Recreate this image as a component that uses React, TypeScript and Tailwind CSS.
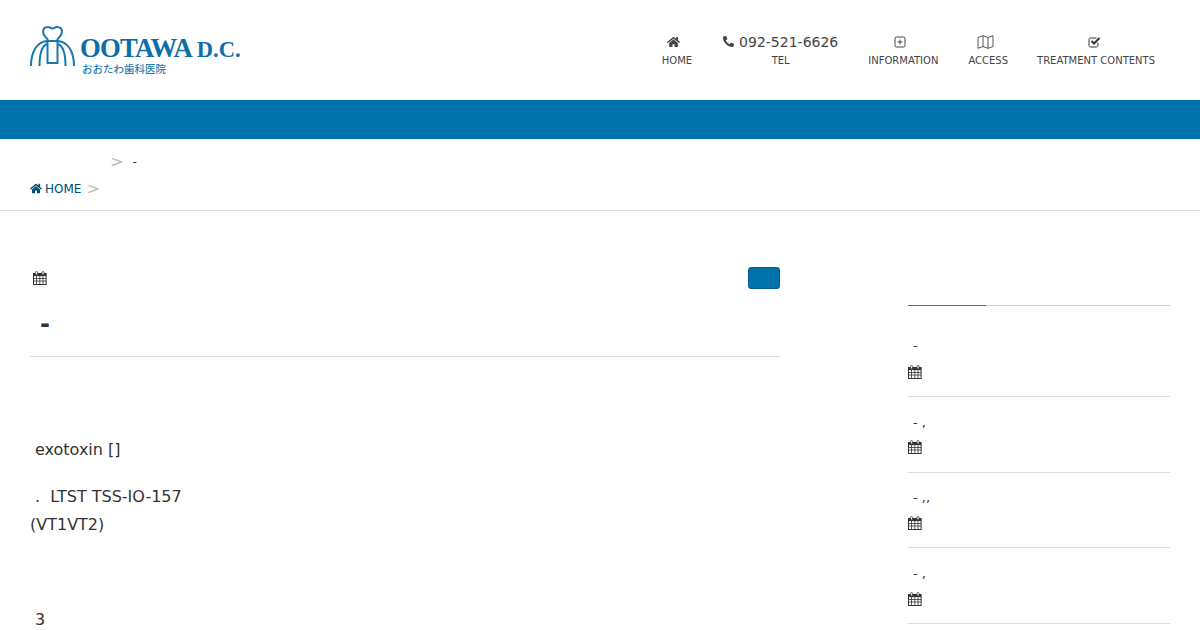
import { FaHome, FaPhone } from "react-icons/fa";

function Cal({ className = "" }: { className?: string }) {
  return (
    <svg viewBox="0 0 14 14" className={className} width="14" height="14" fill="none">
      <rect x="0.5" y="2.5" width="12.6" height="11" fill="#fff" stroke="#333" />
      <rect x="0.5" y="2.5" width="12.6" height="2.6" fill="#333" />
      <path d="M0.5 7.500H13M0.5 10H13M3.500 5V13.500M6.800 5V13.500M10 5V13.500" stroke="#333" strokeWidth="0.8" />
      <rect x="2.600" y="0.5" width="2" height="3.500" rx="1" fill="#fff" stroke="#333" strokeWidth="0.8" />
      <rect x="9" y="0.5" width="2" height="3.500" rx="1" fill="#fff" stroke="#333" strokeWidth="0.8" />
    </svg>
  );
}

function PlusIcon() {
  return (
    <svg width="12" height="12" viewBox="0 0 12 12" fill="none" stroke="#444">
      <rect x="1" y="1" width="10" height="10" rx="1.500" />
      <path d="M6 3.500V8.500M3.500 6H8.500" />
    </svg>
  );
}

function MapIcon() {
  return (
    <svg width="17" height="14" viewBox="0 0 17 14" fill="none" stroke="#444" strokeWidth="0.9">
      <path d="M1 2.500L6 0.700L11 2.500L16 0.700V11.500L11 13.300L6 11.500L1 13.300Z" />
      <path d="M6 0.700V11.500M11 2.500V13.300" />
    </svg>
  );
}

function CheckIcon() {
  return (
    <svg width="13" height="12" viewBox="0 0 13 12" fill="none" stroke="#333">
      <path d="M10 6.500V9.500C10 10.300 9.400 11 8.500 11H2.500C1.600 11 1 10.300 1 9.500V3.500C1 2.600 1.600 2 2.500 2H8.500" />
      <path d="M3.500 5L6 7.500L11.500 2" strokeWidth="2" />
    </svg>
  );
}

function Logo() {
  return (
    <div className="flex items-start">
      <svg width="46" height="42" viewBox="0 0 46 42" fill="none" stroke="#1878ae" strokeWidth="2" className="shrink-0">
        <path d="M18 14C16 11 13 9 13 6C13 2 16 1 18 1C20 1 21 2.500 22.500 2.500C24 2.500 25 1 27 1C29 1 32 2 32 6C32 9 29 11 27 14" />
        <path d="M1 40C1 26 7 15 18 15H27C38 15 44 26 44 40" />
        <path d="M9.500 40C9.500 28 12 20 17 18M35.500 40C35.500 28 33 20 28 18" />
        <rect x="17.500" y="15" width="10" height="22" />
      </svg>
      <div className="ml-[4px] mt-[9px] flex flex-col">
        <div className="font-['Liberation_Serif',serif] font-bold text-[#0f6ea6] text-[26.700px] leading-[26px] tracking-[-0.8px] whitespace-nowrap flex items-baseline">
          <span>OOTAWA</span>
          <span className="text-[22.500px] tracking-[0px] ml-[5px]">D.C.</span>
        </div>
        <div className="font-['Noto_Sans_CJK_JP',sans-serif] text-[#2a7fb0] text-[10.500px] leading-[12px] font-medium ml-[2px] whitespace-nowrap">
          おおたわ歯科医院
        </div>
      </div>
    </div>
  );
}

function NavItem({ icon, label, big, className = "" }: { icon: React.ReactNode; label: string; big?: string; className?: string }) {
  return (
    <div className={`flex flex-col items-center text-[#444] ${className}`}>
      <div className="h-[20px] mt-[1px] flex items-center justify-center gap-[5px] text-[14px] leading-[20px] whitespace-nowrap">
        {icon}
        {big && <span>{big}</span>}
      </div>
      <div className="text-[10px] leading-[16px] mt-[1px] whitespace-nowrap text-[#444]">{label}</div>
    </div>
  );
}

function SideItem({ title, h, top = "mt-[15px]", gap = "mt-[8px]" }: { title: string; h: string; top?: string; gap?: string }) {
  return (
    <div className={`${h} border-b border-[#dddddd] flex flex-col`}>
      <div className={`${top} pl-[5px] text-[13px] leading-[20px] text-[#333] whitespace-pre`}>{title}</div>
      <Cal className={gap} />
    </div>
  );
}

export default function App() {
  return (
    <div className="w-[1200px] h-[630px] overflow-hidden bg-white font-['DejaVu_Sans',sans-serif] text-[#333]">
      <header className="h-[100px] flex items-center justify-between pl-[30px] pr-[45px]">
        <Logo />
        <nav className="flex gap-[30px] mt-[-1px]">
          <NavItem icon={<FaHome className="w-[13px] h-[12px] mr-[6px]" />} label="HOME" className="mr-[1px]" />
          <NavItem icon={<FaPhone className="w-[11px] h-[11px] -scale-x-100" />} big="092-521-6626" label="TEL" />
          <NavItem icon={<span className="mr-[6px]"><PlusIcon /></span>} label="INFORMATION" />
          <NavItem icon={<span className="mr-[6px]"><MapIcon /></span>} label="ACCESS" className="mr-[-1px]" />
          <NavItem icon={<span className="mr-[4px]"><CheckIcon /></span>} label="TREATMENT CONTENTS" />
        </nav>
      </header>
      <div className="h-[39px] bg-[#0071ab]" />
      <div className="h-[72px] border-b border-[#dddddd] pl-[30px]">
        <div className="h-[44px] flex items-center pl-[80px] pt-[1px]">
          <span className="text-[#bbb] text-[16px]">&gt;</span>
          <span className="ml-[9px] text-[12px] text-[#333]">-</span>
        </div>
        <div className="flex items-center h-[11px]">
          <FaHome className="w-[12px] h-[11px] text-[#004d73]" />
          <span className="ml-[3px] text-[12px] text-[#004d73]">HOME</span>
          <span className="ml-[5px] text-[#bbb] text-[16px]">&gt;</span>
        </div>
      </div>
      <main className="flex pl-[30px] pr-[30px]">
        <article className="w-[750px]">
          <div className="flex justify-between items-start pt-[56px] pl-[3px]">
            <Cal className="mt-[4px]" />
            <div className="w-[32px] h-[22px] rounded-[3px] bg-[#0071ab] border border-[#005f90]" />
          </div>
          <h1 className="h-[68px] border-b border-[#dddddd] pl-[10px] pt-[17px] text-[24px] leading-[36px] font-bold text-[#333]">-</h1>
          <div className="text-[16px] leading-[28px] text-[#333]">
            <p className="pt-[79px] pl-[5px]">exotoxin []</p>
            <p className="pt-[19px]"><span className="pl-[5px]">.&nbsp; LTST TSS-IO-157</span><br />(VT1VT2)</p>
            <p className="pt-[67px] pl-[5px]">3</p>
          </div>
        </article>
        <aside className="ml-[128px] w-[262px] pt-[94px]">
          <div className="border-t border-[#cccccc] relative">
            <div className="absolute left-0 top-[-1px] w-[78px] border-t border-[#0085c8]" />
          </div>
          <SideItem title="-" h="h-[91px]" top="mt-[30px]" gap="mt-[9px]" />
          <SideItem title="- ," h="h-[76px]" top="mt-[16px]" gap="mt-[7px]" />
          <SideItem title="- ,," h="h-[75px]" />
          <SideItem title="- ," h="h-[76px]" top="mt-[16px]" />
        </aside>
      </main>
    </div>
  );
}
